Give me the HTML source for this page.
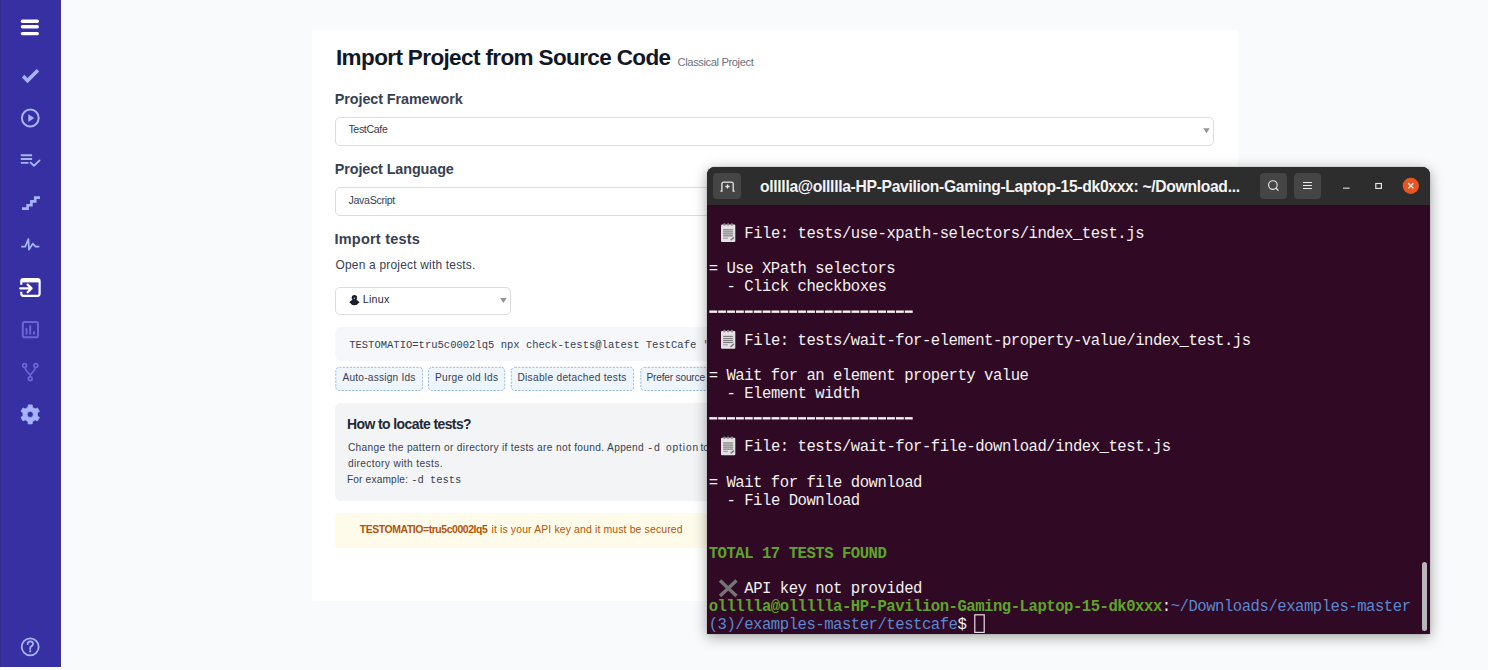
<!DOCTYPE html>
<html><head><meta charset="utf-8">
<style>
*{box-sizing:border-box;margin:0;padding:0}
html,body{width:1488px;height:670px;overflow:hidden;background:#f9fafb;font-family:"Liberation Sans",sans-serif;position:relative}
.a{position:absolute;white-space:nowrap}
.abs{position:absolute}
svg{position:absolute;overflow:visible}
</style></head>
<body>
<!-- sidebar -->
<div class="abs" style="left:0;top:0;width:61px;height:667px;background:#3730a3"></div>
<div class="abs" style="left:0;top:0;width:1px;height:667px;background:#332c8e"></div>
<div class="abs" style="left:60px;top:0;width:1px;height:667px;background:#3a3494"></div>
<svg style="left:0;top:0" width="61" height="670" viewBox="0 0 61 670">
  <g fill="#fff">
    <rect x="20.8" y="19.6" width="18.2" height="3.3" rx="1.6"/>
    <rect x="20.8" y="25.1" width="18.2" height="3.3" rx="1.6"/>
    <rect x="20.8" y="31.9" width="18.2" height="3.3" rx="1.6"/>
  </g>
  <g fill="none" stroke="#a5b4fc">
    <path d="M21.85 77.4 L24.4 74.8 L27.5 77.9 L36.7 68.9 L39.2 71.4 L27.5 83.2 Z" fill="#a5b4fc" stroke="none"/>
    <circle cx="30.3" cy="118" r="8.4" stroke-width="2"/>
    <path d="M28.3 114.3 L34.4 118.1 L28.3 121.9 Z" fill="#a5b4fc" stroke="none"/>
    <path d="M20.8 155.2 H32.1 M20.8 159 H32.1 M20.8 162.9 H28.5" stroke-width="1.9"/>
    <path d="M30.6 162.6 L34 165.8 L39.6 160.4" stroke-width="1.9" stroke-linecap="round" stroke-linejoin="round"/>
    <path d="M22 208.6 H27.6 V205.2 H31.4 V201.4 H35.2 V197.6 H40" stroke-width="2.6" stroke-linejoin="miter"/>
    <path d="M21.9 246.6 H25.2 L28.4 239.2 L29 249.6 L32.7 243.6 L35.6 246.6 H38.6" stroke-width="1.8" stroke-linejoin="round" stroke-linecap="round"/>
  </g>
  <g fill="none" stroke="#fff" stroke-width="2.2">
    <path d="M21.3 284.8 V281.2 Q21.3 279.2 23.3 279.2 H37.6 Q39.6 279.2 39.6 281.2 V293.8 Q39.6 295.8 37.6 295.8 H23.3 Q21.3 295.8 21.3 293.8 V291.8"/>
    <rect x="21.3" y="279.2" width="18.3" height="3.2" fill="#fff" stroke="none"/>
    <path d="M20.2 288.4 H31.6 M27.6 284.6 L31.6 288.4 L27.6 292.2" stroke-linecap="round" stroke-linejoin="round"/>
  </g>
  <g fill="none" stroke="#6b66d6" stroke-width="2">
    <rect x="22.8" y="322" width="15.2" height="15.2" rx="1.8"/>
    <path d="M26.5 328.2 V334.6 M30.2 325.2 V334.6 M34 331.4 V334.6" stroke-width="2"/>
    <circle cx="24.6" cy="365.6" r="1.9" stroke-width="1.7"/>
    <circle cx="35.8" cy="365.6" r="1.9" stroke-width="1.7"/>
    <circle cx="30.2" cy="378.8" r="1.9" stroke-width="1.7"/>
    <path d="M24.9 367.5 Q25.6 370.6 30.2 374.8 Q34.8 370.6 35.5 367.5 M30.2 374.8 V376.9" stroke-width="1.6"/>
  </g>
  <g fill="#a5b4fc">
    <path fill-rule="evenodd" stroke="#a5b4fc" stroke-width="0.8" stroke-linejoin="round" d="M26.55 408.08 L28.07 407.42 L28.18 404.91 L32.22 404.91 L32.33 407.42 L33.85 408.08 L35.18 409.06 L37.41 407.91 L39.43 411.40 L37.31 412.76 L37.50 414.40 L37.31 416.04 L39.43 417.40 L37.41 420.89 L35.18 419.74 L33.85 420.72 L32.33 421.38 L32.22 423.89 L28.18 423.89 L28.07 421.38 L26.55 420.72 L25.22 419.74 L22.99 420.89 L20.97 417.40 L23.09 416.04 L22.90 414.40 L23.09 412.76 L20.97 411.40 L22.99 407.91 L25.22 409.06 Z M30.20 411.30 A3.1 3.1 0 1 0 30.20 417.50 A3.1 3.1 0 1 0 30.20 411.30 Z"/>
  </g>
  <g fill="none" stroke="#a5b4fc" stroke-width="1.8">
    <circle cx="30.2" cy="646.8" r="8.5"/>
    <path d="M27.6 644.2 Q27.6 641.4 30.3 641.4 Q33 641.4 33 643.9 Q33 645.6 31.2 646.4 Q30.2 646.9 30.2 648.4 V649" stroke-linecap="round"/>
    <circle cx="30.2" cy="651.3" r="1.1" fill="#a5b4fc" stroke="none"/>
  </g>
</svg>

<!-- card -->
<div class="abs" style="left:312px;top:30px;width:926px;height:571px;background:#fff;border-radius:3px"></div>
<!-- selects -->
<div class="abs" style="left:335px;top:117px;width:879px;height:29px;border:1px solid #dcdddf;border-radius:5px;background:#fff"></div>
<svg style="left:0;top:0" width="1" height="1"><path d="M1203.2 128.3 L1209.8 128.3 L1206.5 133.3 Z" fill="#959595"/></svg>
<div class="abs" style="left:335px;top:187px;width:879px;height:29px;border:1px solid #dcdddf;border-radius:5px;background:#fff"></div>
<div class="abs" style="left:335px;top:287px;width:176px;height:28px;border:1px solid #dcdddf;border-radius:5px;background:#fff"></div>
<svg style="left:0;top:0" width="1" height="1"><path d="M500.1 298 L506.7 298 L503.4 302.9 Z" fill="#959595"/></svg>
<svg style="left:0;top:0" width="1" height="1"><g fill="#1a202c">
  <circle cx="354.4" cy="297.7" r="2.7"/>
  <path d="M349.3 302.6 Q351.2 299.4 354.4 299.4 Q357.6 299.4 359.6 302.6 Q358 303.3 357.7 304 Q356.9 305.3 354.4 305.3 Q351.9 305.3 351.1 304 Q350.8 303.3 349.3 302.6 Z"/>
  <circle cx="354.4" cy="298.2" r="0.6" fill="#fff"/>
</g></svg>
<!-- code block -->
<div class="abs" style="left:335px;top:327px;width:880px;height:34px;background:#f5f7fa;border-radius:6px"></div>
<!-- buttons -->
<svg style="left:0;top:0" width="1" height="1"><g fill="#eff5fd" stroke="#98bce8" stroke-width="1" stroke-dasharray="2.2 1.3">
<rect x="335.8" y="367.3" width="86.8" height="23.2" rx="3.5"/>
<rect x="428.5" y="367.3" width="76.2" height="23.2" rx="3.5"/>
<rect x="511.3" y="367.3" width="122.3" height="23.2" rx="3.5"/>
<rect x="640.8" y="367.3" width="124" height="23.2" rx="3.5"/>
</g></svg>
<!-- how box -->
<div class="abs" style="left:335px;top:403px;width:880px;height:98px;background:#f3f4f6;border-radius:6px"></div>
<!-- warning -->
<div class="abs" style="left:335px;top:513px;width:880px;height:35px;background:#fffbeb;border-radius:4px"></div>

<div id="t_title" class="a" style="left:336.00px;top:41.69px;line-height:32px;letter-spacing:-0.633px;color:#111827;font-family:'Liberation Sans',sans-serif;font-size:22.529px;font-weight:bold;">Import Project from Source Code</div>
<div id="t_classical" class="a" style="left:677.60px;top:53.97px;line-height:16px;letter-spacing:-0.406px;color:#6b7280;font-family:'Liberation Sans',sans-serif;font-size:11.192px;font-weight:normal;">Classical Project</div>
<div id="t_fw" class="a" style="left:334.80px;top:89.01px;line-height:20px;letter-spacing:-0.088px;color:#374151;font-family:'Liberation Sans',sans-serif;font-size:14.390px;font-weight:bold;">Project Framework</div>
<div id="t_testcafe" class="a" style="left:348.40px;top:122.42px;line-height:15px;letter-spacing:-0.343px;color:#374151;font-family:'Liberation Sans',sans-serif;font-size:10.610px;font-weight:normal;">TestCafe</div>
<div id="t_lang" class="a" style="left:334.80px;top:159.11px;line-height:20px;letter-spacing:-0.107px;color:#374151;font-family:'Liberation Sans',sans-serif;font-size:14.390px;font-weight:bold;">Project Language</div>
<div id="t_js" class="a" style="left:348.40px;top:192.72px;line-height:15px;letter-spacing:-0.289px;color:#374151;font-family:'Liberation Sans',sans-serif;font-size:10.610px;font-weight:normal;">JavaScript</div>
<div id="t_imp" class="a" style="left:334.50px;top:229.06px;line-height:20px;letter-spacing:0.209px;color:#374151;font-family:'Liberation Sans',sans-serif;font-size:14.535px;font-weight:bold;">Import tests</div>
<div id="t_open" class="a" style="left:335.50px;top:257.17px;line-height:17px;letter-spacing:0.220px;color:#374151;font-family:'Liberation Sans',sans-serif;font-size:11.919px;font-weight:normal;">Open a project with tests.</div>
<div id="t_linux" class="a" style="left:362.80px;top:291.82px;line-height:15px;letter-spacing:0.275px;color:#1f2937;font-family:'Liberation Sans',sans-serif;font-size:10.610px;font-weight:normal;">Linux</div>
<div id="t_code" class="a" style="left:349.20px;top:337.90px;line-height:15px;letter-spacing:0.000px;color:#374151;font-family:'Liberation Mono',monospace;font-size:10.530px;font-weight:normal;">TESTOMATIO=tru5c0002lq5 npx check-tests@latest TestCafe <span style="color:#b91c1c">'</span></div>
<div id="t_b1" class="a" style="left:342.50px;top:371.07px;line-height:14px;letter-spacing:0.207px;color:#374151;font-family:'Liberation Sans',sans-serif;font-size:10.174px;font-weight:normal;">Auto-assign Ids</div>
<div id="t_b2" class="a" style="left:435.00px;top:371.07px;line-height:14px;letter-spacing:0.267px;color:#374151;font-family:'Liberation Sans',sans-serif;font-size:10.174px;font-weight:normal;">Purge old Ids</div>
<div id="t_b3" class="a" style="left:517.40px;top:371.07px;line-height:14px;letter-spacing:0.295px;color:#374151;font-family:'Liberation Sans',sans-serif;font-size:10.174px;font-weight:normal;">Disable detached tests</div>
<div id="t_b4" class="a" style="left:646.50px;top:371.07px;line-height:14px;letter-spacing:0.000px;color:#374151;font-family:'Liberation Sans',sans-serif;font-size:10.174px;font-weight:normal;letter-spacing:-0.2px">Prefer source code</div>
<div id="t_how" class="a" style="left:347.00px;top:414.36px;line-height:20px;letter-spacing:-0.574px;color:#1f2937;font-family:'Liberation Sans',sans-serif;font-size:13.953px;font-weight:bold;">How to locate tests?</div>
<div id="t_p2" class="a" style="left:347.90px;top:457.17px;line-height:14px;letter-spacing:0.385px;color:#374151;font-family:'Liberation Sans',sans-serif;font-size:10.174px;font-weight:normal;">directory with tests.</div>
<div id="t_warnb" class="a" style="left:359.80px;top:521.87px;line-height:15px;letter-spacing:-0.436px;color:#b45309;font-family:'Liberation Sans',sans-serif;font-size:10.465px;font-weight:normal;"><b>TESTOMATIO=tru5c0002lq5</b></div>
<div id="t_warnr" class="a" style="left:491.50px;top:521.87px;line-height:15px;letter-spacing:0.128px;color:#b45309;font-family:'Liberation Sans',sans-serif;font-size:10.465px;font-weight:normal;">it is your API key and it must be secured</div>
<div id="t_p1a" class="a" style="left:347.90px;top:441.17px;line-height:14px;letter-spacing:0.333px;color:#374151;font-family:'Liberation Sans',sans-serif;font-size:10.174px;font-weight:normal;">Change the pattern or directory if tests are not found. Append</div>
<div id="t_p1b" class="a" style="left:646.90px;top:441.40px;line-height:15px;letter-spacing:0.600px;color:#374151;font-family:'Liberation Mono',monospace;font-size:10.530px;font-weight:normal;">-d</div>
<div id="t_p1c" class="a" style="left:666.00px;top:441.17px;line-height:14px;letter-spacing:0.900px;color:#374151;font-family:'Liberation Sans',sans-serif;font-size:10.174px;font-weight:normal;">option</div>
<div id="t_p1d" class="a" style="left:700.40px;top:441.17px;line-height:14px;letter-spacing:0.000px;color:#374151;font-family:'Liberation Sans',sans-serif;font-size:10.174px;font-weight:normal;letter-spacing:0.1px">to specify</div>
<div id="t_p3a" class="a" style="left:346.90px;top:472.87px;line-height:14px;letter-spacing:0.164px;color:#374151;font-family:'Liberation Sans',sans-serif;font-size:10.174px;font-weight:normal;">For example:</div>
<div id="t_p3b" class="a" style="left:411.30px;top:473.10px;line-height:15px;letter-spacing:-0.057px;color:#374151;font-family:'Liberation Mono',monospace;font-size:10.530px;font-weight:normal;">-d tests</div>

<!-- terminal -->
<div class="abs" style="left:707px;top:167px;width:723px;height:466.5px;border-radius:8px 8px 0 0;background:#300a24;box-shadow:0 3px 14px rgba(0,0,0,.36),0 0 1px rgba(0,0,0,.5);overflow:hidden">
  <div class="abs" style="left:0;top:0;width:723px;height:38px;background:#2d2d2d"></div>
  <div class="abs" style="left:6.4px;top:6.1px;width:27.6px;height:25.9px;border-radius:4px;background:#454545"></div>
  <div class="abs" style="left:553.1px;top:6.1px;width:26.9px;height:25.8px;border-radius:4px;background:#454545"></div>
  <div class="abs" style="left:587.2px;top:6.1px;width:26.8px;height:25.8px;border-radius:4px;background:#454545"></div>
  <div class="abs" style="left:715px;top:395px;width:5px;height:69px;border-radius:3px;background:#b9b6b9"></div>
</div>
<svg style="left:0;top:0" width="1" height="1">
  <g fill="none" stroke="#e8e8e8" stroke-width="1.3">
    <path d="M720.4 191.2 H721.9 V184 Q721.9 182.1 723.8 182.1 H731.3 Q733.2 182.1 733.2 184 V191.2 H734.7" />
    <path d="M725.4 186.5 H729.6 M727.5 184.4 V188.6"/>
    <circle cx="1272.9" cy="185" r="4.3" stroke-width="1.15"/>
    <path d="M1275.9 188 L1278.4 190.6" stroke-width="1.3"/>
    <path d="M1303 182.5 H1311.9 M1303 185.5 H1311.9 M1303 188.5 H1311.9" stroke-width="1.1"/>
    <path d="M1343 188.2 H1349.6" stroke="#c8c8c8" stroke-width="1.3"/>
    <rect x="1375.8" y="183.5" width="5.6" height="4.9" stroke-width="1.15"/>
  </g>
  <circle cx="1410.8" cy="185.8" r="8.1" fill="#e95420"/>
  <path d="M1408.2 183.2 L1413.4 188.4 M1413.4 183.2 L1408.2 188.4" stroke="#fff" stroke-width="1.25"/>
</svg>
<div id="t_ttl" class="a" style="left:760.00px;top:175.96px;line-height:22px;letter-spacing:-0.326px;color:#f3f3f3;font-family:'Liberation Sans',sans-serif;font-size:15.698px;font-weight:bold;">ollllla@ollllla-HP-Pavilion-Gaming-Laptop-15-dk0xxx: ~/Download...</div>
<div class="a" style="left:744.25px;top:224.95px;line-height:18px;font-family:'Liberation Mono',monospace;font-size:15.6px;letter-spacing:-0.474px;color:#f2f0f0;font-weight:normal;">File: tests/use-xpath-selectors/index_test.js</div>
<div class="a" style="left:708.70px;top:260.49px;line-height:18px;font-family:'Liberation Mono',monospace;font-size:15.6px;letter-spacing:-0.474px;color:#f2f0f0;font-weight:normal;">= Use XPath selectors</div>
<div class="a" style="left:726.47px;top:278.26px;line-height:18px;font-family:'Liberation Mono',monospace;font-size:15.6px;letter-spacing:-0.474px;color:#f2f0f0;font-weight:normal;">- Click checkboxes</div>
<div class="a" style="left:744.25px;top:331.57px;line-height:18px;font-family:'Liberation Mono',monospace;font-size:15.6px;letter-spacing:-0.474px;color:#f2f0f0;font-weight:normal;">File: tests/wait-for-element-property-value/index_test.js</div>
<div class="a" style="left:708.70px;top:367.11px;line-height:18px;font-family:'Liberation Mono',monospace;font-size:15.6px;letter-spacing:-0.474px;color:#f2f0f0;font-weight:normal;">= Wait for an element property value</div>
<div class="a" style="left:726.47px;top:384.88px;line-height:18px;font-family:'Liberation Mono',monospace;font-size:15.6px;letter-spacing:-0.474px;color:#f2f0f0;font-weight:normal;">- Element width</div>
<div class="a" style="left:744.25px;top:438.19px;line-height:18px;font-family:'Liberation Mono',monospace;font-size:15.6px;letter-spacing:-0.474px;color:#f2f0f0;font-weight:normal;">File: tests/wait-for-file-download/index_test.js</div>
<div class="a" style="left:708.70px;top:473.73px;line-height:18px;font-family:'Liberation Mono',monospace;font-size:15.6px;letter-spacing:-0.474px;color:#f2f0f0;font-weight:normal;">= Wait for file download</div>
<div class="a" style="left:726.47px;top:491.50px;line-height:18px;font-family:'Liberation Mono',monospace;font-size:15.6px;letter-spacing:-0.474px;color:#f2f0f0;font-weight:normal;">- File Download</div>
<div class="a" style="left:708.70px;top:544.81px;line-height:18px;font-family:'Liberation Mono',monospace;font-size:15.6px;letter-spacing:-0.474px;color:#5ea42a;font-weight:bold;">TOTAL 17 TESTS FOUND</div>
<div class="a" style="left:744.25px;top:580.35px;line-height:18px;font-family:'Liberation Mono',monospace;font-size:15.6px;letter-spacing:-0.474px;color:#f2f0f0;font-weight:normal;">API key not provided</div>
<div class="a" style="left:708.70px;top:598.12px;line-height:18px;font-family:'Liberation Mono',monospace;font-size:15.6px;letter-spacing:-0.474px;color:#f2f0f0;font-weight:normal;"><b style="color:#5ea42a">ollllla@ollllla-HP-Pavilion-Gaming-Laptop-15-dk0xxx</b>:<span style="color:#5b88cf">~/Downloads/examples-master</span></div>
<div class="a" style="left:708.70px;top:615.89px;line-height:18px;font-family:'Liberation Mono',monospace;font-size:15.6px;letter-spacing:-0.474px;color:#f2f0f0;font-weight:normal;"><span style="color:#5b88cf">(3)/examples-master/testcafe</span>$ </div>
<svg style="left:0;top:0" width="1" height="1"><g fill="#f2f0f0"><rect x="709.30" y="310.48" width="7.89" height="2.4"/><rect x="718.19" y="310.48" width="7.89" height="2.4"/><rect x="727.07" y="310.48" width="7.89" height="2.4"/><rect x="735.96" y="310.48" width="7.89" height="2.4"/><rect x="744.85" y="310.48" width="7.89" height="2.4"/><rect x="753.74" y="310.48" width="7.89" height="2.4"/><rect x="762.62" y="310.48" width="7.89" height="2.4"/><rect x="771.51" y="310.48" width="7.89" height="2.4"/><rect x="780.40" y="310.48" width="7.89" height="2.4"/><rect x="789.28" y="310.48" width="7.89" height="2.4"/><rect x="798.17" y="310.48" width="7.89" height="2.4"/><rect x="807.06" y="310.48" width="7.89" height="2.4"/><rect x="815.94" y="310.48" width="7.89" height="2.4"/><rect x="824.83" y="310.48" width="7.89" height="2.4"/><rect x="833.72" y="310.48" width="7.89" height="2.4"/><rect x="842.61" y="310.48" width="7.89" height="2.4"/><rect x="851.49" y="310.48" width="7.89" height="2.4"/><rect x="860.38" y="310.48" width="7.89" height="2.4"/><rect x="869.27" y="310.48" width="7.89" height="2.4"/><rect x="878.15" y="310.48" width="7.89" height="2.4"/><rect x="887.04" y="310.48" width="7.89" height="2.4"/><rect x="895.93" y="310.48" width="7.89" height="2.4"/><rect x="904.81" y="310.48" width="7.89" height="2.4"/><rect x="709.30" y="417.10" width="7.89" height="2.4"/><rect x="718.19" y="417.10" width="7.89" height="2.4"/><rect x="727.07" y="417.10" width="7.89" height="2.4"/><rect x="735.96" y="417.10" width="7.89" height="2.4"/><rect x="744.85" y="417.10" width="7.89" height="2.4"/><rect x="753.74" y="417.10" width="7.89" height="2.4"/><rect x="762.62" y="417.10" width="7.89" height="2.4"/><rect x="771.51" y="417.10" width="7.89" height="2.4"/><rect x="780.40" y="417.10" width="7.89" height="2.4"/><rect x="789.28" y="417.10" width="7.89" height="2.4"/><rect x="798.17" y="417.10" width="7.89" height="2.4"/><rect x="807.06" y="417.10" width="7.89" height="2.4"/><rect x="815.94" y="417.10" width="7.89" height="2.4"/><rect x="824.83" y="417.10" width="7.89" height="2.4"/><rect x="833.72" y="417.10" width="7.89" height="2.4"/><rect x="842.61" y="417.10" width="7.89" height="2.4"/><rect x="851.49" y="417.10" width="7.89" height="2.4"/><rect x="860.38" y="417.10" width="7.89" height="2.4"/><rect x="869.27" y="417.10" width="7.89" height="2.4"/><rect x="878.15" y="417.10" width="7.89" height="2.4"/><rect x="887.04" y="417.10" width="7.89" height="2.4"/><rect x="895.93" y="417.10" width="7.89" height="2.4"/><rect x="904.81" y="417.10" width="7.89" height="2.4"/></g><g transform="translate(721.00,223.60)"><rect x="0" y="0.9" width="14.3" height="17.6" rx="1" fill="#e4e2e4"/><circle cx="3.4" cy="0.9" r="1.25" fill="#8a8a8a"/><circle cx="7.1" cy="0.9" r="1.25" fill="#8a8a8a"/><circle cx="10.9" cy="0.9" r="1.25" fill="#8a8a8a"/><rect x="2.1" y="5.6" width="10" height="1.15" fill="#7c7c7c"/><rect x="2.1" y="7.7" width="10" height="1.15" fill="#7c7c7c"/><rect x="2.1" y="9.7" width="10" height="1.15" fill="#7c7c7c"/><rect x="2.1" y="11.7" width="10" height="1.15" fill="#7c7c7c"/><rect x="2.1" y="13.9" width="4.8" height="1.4" fill="#a8a8a8"/><path d="M9.6 16.6 L12.9 13.8" stroke="#7a7a7a" stroke-width="1.5"/></g><g transform="translate(721.00,330.22)"><rect x="0" y="0.9" width="14.3" height="17.6" rx="1" fill="#e4e2e4"/><circle cx="3.4" cy="0.9" r="1.25" fill="#8a8a8a"/><circle cx="7.1" cy="0.9" r="1.25" fill="#8a8a8a"/><circle cx="10.9" cy="0.9" r="1.25" fill="#8a8a8a"/><rect x="2.1" y="5.6" width="10" height="1.15" fill="#7c7c7c"/><rect x="2.1" y="7.7" width="10" height="1.15" fill="#7c7c7c"/><rect x="2.1" y="9.7" width="10" height="1.15" fill="#7c7c7c"/><rect x="2.1" y="11.7" width="10" height="1.15" fill="#7c7c7c"/><rect x="2.1" y="13.9" width="4.8" height="1.4" fill="#a8a8a8"/><path d="M9.6 16.6 L12.9 13.8" stroke="#7a7a7a" stroke-width="1.5"/></g><g transform="translate(721.00,436.84)"><rect x="0" y="0.9" width="14.3" height="17.6" rx="1" fill="#e4e2e4"/><circle cx="3.4" cy="0.9" r="1.25" fill="#8a8a8a"/><circle cx="7.1" cy="0.9" r="1.25" fill="#8a8a8a"/><circle cx="10.9" cy="0.9" r="1.25" fill="#8a8a8a"/><rect x="2.1" y="5.6" width="10" height="1.15" fill="#7c7c7c"/><rect x="2.1" y="7.7" width="10" height="1.15" fill="#7c7c7c"/><rect x="2.1" y="9.7" width="10" height="1.15" fill="#7c7c7c"/><rect x="2.1" y="11.7" width="10" height="1.15" fill="#7c7c7c"/><rect x="2.1" y="13.9" width="4.8" height="1.4" fill="#a8a8a8"/><path d="M9.6 16.6 L12.9 13.8" stroke="#7a7a7a" stroke-width="1.5"/></g><path d="M720 580.50 L736.5 596.00 M736.5 580.50 L720 596.00" stroke="#757575" stroke-width="3.4"/><rect x="974.81" y="614.80" width="9.4" height="17.6" fill="none" stroke="#eadde6" stroke-width="1.2"/></svg>
</body></html>
